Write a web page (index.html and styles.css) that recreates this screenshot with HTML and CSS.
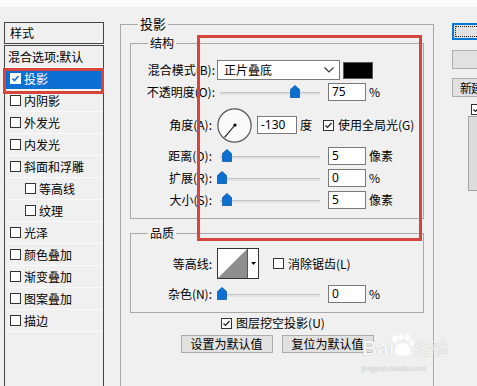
FILE: index.html
```html
<!DOCTYPE html>
<html lang="zh-CN">
<head>
<meta charset="utf-8">
<title>图层样式</title>
<link rel="stylesheet" href="styles.css">
</head>
<body>
<div class="dialog">
  <aside class="styles-panel">
    <div class="styles-header">样式</div>
    <ul class="styles-list">
      <li class="style-row plain">混合选项:默认</li>
      <li class="style-row selected"><span class="cb cb-sel"><svg viewBox="0 0 9 9"><polyline points="1.5,4.5 3.5,6.5 7.5,2"/></svg></span>投影<span class="annot-row"></span></li>
      <li class="style-row"><span class="cb"></span>内阴影</li>
      <li class="style-row"><span class="cb"></span>外发光</li>
      <li class="style-row"><span class="cb"></span>内发光</li>
      <li class="style-row"><span class="cb"></span>斜面和浮雕</li>
      <li class="style-row sub"><span class="cb"></span>等高线</li>
      <li class="style-row sub"><span class="cb"></span>纹理</li>
      <li class="style-row"><span class="cb"></span>光泽</li>
      <li class="style-row"><span class="cb"></span>颜色叠加</li>
      <li class="style-row"><span class="cb"></span>渐变叠加</li>
      <li class="style-row"><span class="cb"></span>图案叠加</li>
      <li class="style-row"><span class="cb"></span>描边</li>
    </ul>
  </aside>

  <main class="main">
    <fieldset class="group-outer">
      <legend>投影</legend>

      <fieldset class="group-inner structure">
        <legend>结构</legend>
        <div class="row r1">
          <span class="lbl">混合模式(B):</span>
          <span class="select"><span>正片叠底</span><svg class="chev" viewBox="0 0 10 6"><polyline points="0.5,0.5 5,5 9.5,0.5"/></svg></span>
          <span class="swatch"></span>
        </div>
        <div class="row r2">
          <span class="lbl">不透明度(O):</span>
          <span class="slider"><span class="track"></span><svg class="thumb" style="--v:75" viewBox="0 0 10 13"><path d="M0.5 4.5 L5 0.5 L9.5 4.5 V12.5 H0.5 Z"/></svg></span>
          <span class="num">75</span>
          <span class="unit">%</span>
        </div>
        <div class="row r3">
          <span class="lbl n">角度(A):</span>
          <svg class="dial" viewBox="0 0 35 35"><circle cx="17.5" cy="17.5" r="16.6"/><line x1="18" y1="17" x2="7.6" y2="29.4"/><circle class="dot" cx="18" cy="17" r="1.6"/></svg>
          <span class="num wide">-130</span>
          <span class="unit">度</span>
          <span class="cb cb-global"><svg viewBox="0 0 9 9"><polyline points="1.5,4.5 3.5,6.5 7.5,2"/></svg></span>
          <span class="cb-text">使用全局光(G)</span>
        </div>
        <div class="row">
          <span class="lbl n">距离(D):</span>
          <span class="slider"><span class="track"></span><svg class="thumb" style="--v:5" viewBox="0 0 10 13"><path d="M0.5 4.5 L5 0.5 L9.5 4.5 V12.5 H0.5 Z"/></svg></span>
          <span class="num">5</span>
          <span class="unit">像素</span>
        </div>
        <div class="row">
          <span class="lbl n">扩展(R):</span>
          <span class="slider"><span class="track"></span><svg class="thumb" style="--v:0" viewBox="0 0 10 13"><path d="M0.5 4.5 L5 0.5 L9.5 4.5 V12.5 H0.5 Z"/></svg></span>
          <span class="num">0</span>
          <span class="unit">%</span>
        </div>
        <div class="row">
          <span class="lbl n">大小(S):</span>
          <span class="slider"><span class="track"></span><svg class="thumb" style="--v:5" viewBox="0 0 10 13"><path d="M0.5 4.5 L5 0.5 L9.5 4.5 V12.5 H0.5 Z"/></svg></span>
          <span class="num">5</span>
          <span class="unit">像素</span>
        </div>
      </fieldset>

      <fieldset class="group-inner quality">
        <legend>品质</legend>
        <div class="row rc">
          <span class="lbl n">等高线:</span>
          <span class="contour">
            <span class="contour-img"><svg viewBox="0 0 29 29"><polygon points="0,29 29,0 29,29"/></svg></span>
            <span class="contour-arrow"><svg viewBox="0 0 5 3"><polygon points="0,0 5,0 2.5,3"/></svg></span>
          </span>
          <span class="cb cb-aa"></span>
          <span class="cb-text">消除锯齿(L)</span>
        </div>
        <div class="row rn">
          <span class="lbl n">杂色(N):</span>
          <span class="slider"><span class="track"></span><svg class="thumb" style="--v:0" viewBox="0 0 10 13"><path d="M0.5 4.5 L5 0.5 L9.5 4.5 V12.5 H0.5 Z"/></svg></span>
          <span class="num">0</span>
          <span class="unit">%</span>
        </div>
      </fieldset>

      <div class="knockout">
        <span class="cb"><svg viewBox="0 0 9 9"><polyline points="1.5,4.5 3.5,6.5 7.5,2"/></svg></span>
        <span>图层挖空投影(U)</span>
      </div>
      <div class="btns">
        <button class="btn">设置为默认值</button>
        <button class="btn">复位为默认值</button>
      </div>
    </fieldset>
  </main>

  <aside class="actions">
    <button class="abtn ok" aria-label="确定"></button>
    <button class="abtn cancel" aria-label="取消"></button>
    <button class="abtn new"><span class="new-text">新建</span></button>
    <span class="cb cb-preview"><svg viewBox="0 0 9 9"><polyline points="1.5,4.5 3.5,6.5 7.5,2"/></svg></span>
    <div class="preview"></div>
  </aside>

  <div class="annot-main"></div>

  <div class="watermark">
    <div class="wm-line">
      <span class="wm-bai">Bai</span>
      <svg class="wm-paw" viewBox="0 0 26 24"><ellipse cx="6" cy="6" rx="2.6" ry="3.4"/><ellipse cx="12" cy="3.6" rx="2.6" ry="3.4"/><ellipse cx="18.5" cy="4.4" rx="2.6" ry="3.4"/><ellipse cx="22.6" cy="10" rx="2.4" ry="3"/><path d="M6 19 C6 13 10 10 14 10 C18 10 22 14 22 19 C22 23 18 23 14 22 C10 23 6 23 6 19 Z"/></svg>
      <span class="wm-jy">经验</span>
    </div>
    <div class="wm-url">jingyan.baidu.com</div>
  </div>
</div>
</body>
</html>
```

FILE: styles.css
```css
* { box-sizing: border-box; }
html, body { margin: 0; padding: 0; }
body {
  width: 477px;
  height: 386px;
  overflow: hidden;
  background: linear-gradient(#fbfbfb 0 7px, #f0f0f0 7px);
  font-family: "Noto Sans CJK SC", "Microsoft YaHei", sans-serif;
  font-size: 12px;
  line-height: 16px;
  color: #000;
}

.dialog {
  position: relative;
  display: flex;
  align-items: flex-start;
  height: 386px;
}

/* ---------- styles list ---------- */
.styles-panel {
  flex: none;
  width: 100px;
  height: 364px;
  margin: 22px 0 0 4px;
  display: flex;
  flex-direction: column;
}
.styles-header {
  height: 22px;
  border: 1px solid #444;
  padding-left: 5px;
  line-height: 20px;
}
.styles-list {
  flex: 1;
  list-style: none;
  margin: 1px 0 0;
  padding: 0;
  border: 1px solid #444;
  border-bottom: none;
}
.style-row {
  position: relative;
  height: 22px;
  display: flex;
  align-items: center;
  gap: 3px;
  padding-left: 5px;
  border-bottom: 1px solid #fbfbfb;
}
.style-row.plain { padding-left: 3px; }
.style-row.sub { padding-left: 20px; }
.style-row.selected { background: #0c6fd3; color: #fff; }
.annot-row {
  position: absolute;
  left: -2px;
  right: -1px;
  top: 0;
  bottom: -5px;
  border: 3px solid #d6453d;
}

/* ---------- checkbox ---------- */
.cb {
  flex: none;
  width: 11px;
  height: 11px;
  border: 1px solid #333;
  background: #fff;
  display: block;
}
.cb svg {
  display: block;
  width: 9px;
  height: 9px;
  fill: none;
  stroke: #222;
  stroke-width: 1.2;
}
.cb-sel { border-color: #fff; }
.cb-sel svg { stroke: #0c6fd3; stroke-width: 1.6; }

/* ---------- main group ---------- */
.main {
  flex: none;
  width: 314px;
  margin: 16px 0 0 16px;
}
fieldset {
  margin: 0;
  padding: 0;
  min-width: 0;
  border: 1px solid #a9a9a9;
}
legend {
  padding: 0 2px;
  height: 16px;
  line-height: 16px;
}
.group-outer { height: 380px; }
.group-outer > legend { margin-left: 17px; font-size: 13px; }
.group-inner { margin: 3px 9px 0; }
.group-inner > legend { margin-left: 17px; }
.structure { padding: 9px 0 9px; }
.quality { margin-top: 6px; padding: 7px 0 9px; }

.row {
  display: flex;
  align-items: center;
  height: 18px;
  margin-top: 4px;
}
.row.r1 { height: 20px; margin-top: 0; }
.row.r2 { margin-top: 3px; }
.row.r3 { height: 36px; margin-top: 6px; }
.row.rc { height: 31px; margin-top: 0; }
.row.rn { margin-top: 6px; }

.lbl {
  flex: none;
  width: 84px;
  text-align: right;
  white-space: nowrap;
}
.lbl.n { padding-right: 3px; }

.select {
  flex: none;
  margin-left: 2px;
  width: 123px;
  height: 20px;
  background: #fff;
  border: 1px solid #7a7a7a;
  display: flex;
  align-items: center;
  justify-content: space-between;
  padding: 0 5px 0 6px;
}
.chev {
  width: 10px;
  height: 6px;
  fill: none;
  stroke: #333;
  stroke-width: 1.1;
}
.swatch {
  flex: none;
  margin-left: 3px;
  width: 30px;
  height: 17px;
  background: #000;
  border: 1px solid #5a5a5a;
}

.slider {
  position: relative;
  flex: none;
  margin-left: 2px;
  width: 105px;
  height: 18px;
  padding: 9px 2px 0 3px;
}
.track {
  display: block;
  height: 3px;
  background: #e2e2e2;
  border-top: 1px solid #c4c4c4;
}
.thumb {
  position: absolute;
  top: 2px;
  left: calc(var(--v) * 0.97px);
  width: 10px;
  height: 13px;
  fill: #0e6fd2;
  stroke: #0a58aa;
  stroke-width: 0.8;
}

.num {
  flex: none;
  margin-left: 6px;
  width: 38px;
  height: 18px;
  background: #fff;
  border: 1px solid #7a7a7a;
  padding-left: 3px;
  line-height: 16px;
  font-family: "Noto Sans", "Noto Sans CJK SC", sans-serif;
}
.num.wide { margin-left: 5px; width: 40px; }
.unit { margin-left: 3px; white-space: nowrap; }

.dial {
  flex: none;
  margin-left: 2px;
  width: 35px;
  height: 35px;
}
.dial circle { fill: #fafafa; stroke: #555; stroke-width: 1.2; }
.dial line { stroke: #111; stroke-width: 1.1; }
.dial .dot { fill: #000; stroke: none; }

.cb-global { margin-left: 11px; }
.cb-text { margin-left: 4px; white-space: nowrap; }

.contour {
  flex: none;
  margin-left: 2px;
  height: 31px;
  display: flex;
  border: 1px solid #333;
  background: #fff;
}
.contour-img {
  width: 30px;
  border-right: 1px solid #555;
}
.contour-img svg { display: block; width: 29px; height: 29px; fill: #8e8e8e; }
.contour-arrow {
  width: 10px;
  display: flex;
  align-items: center;
  justify-content: center;
}
.contour-arrow svg { width: 5px; height: 3px; fill: #000; }
.cb-aa { margin-left: 14px; }

.knockout {
  margin-top: 2px;
  height: 16px;
  display: flex;
  align-items: center;
  justify-content: center;
  gap: 4px;
  padding-right: 8px;
}
.btns {
  margin-top: 4px;
  display: flex;
  justify-content: center;
  gap: 9px;
}
.btn {
  width: 92px;
  height: 18px;
  padding: 0;
  background: #e1e1e1;
  border: 1px solid #adadad;
  font: inherit;
  color: #000;
  line-height: 16px;
}

/* ---------- right column ---------- */
.actions {
  flex: none;
  width: 100px;
  margin-left: 18px;
  display: flex;
  flex-direction: column;
  align-items: flex-start;
}
.abtn {
  flex: none;
  width: 94px;
  padding: 0;
  background: #e1e1e1;
  border: 1px solid #adadad;
  font: inherit;
  color: #000;
  line-height: 16px;
  text-align: left;
  white-space: nowrap;
}
.abtn.ok {
  margin-top: 23px;
  height: 17px;
  border-color: #0078d7;
  box-shadow: inset 0 0 0 1px #0078d7;
  outline: 1px dotted #222;
  outline-offset: -4px;
}
.abtn.cancel { margin-top: 10px; height: 19px; }
.abtn.new { margin-top: 9px; height: 19px; padding-left: 7px; }
.new-text { letter-spacing: -1px; }
.cb-preview { margin: 7px 0 0 19px; }
.preview {
  margin: 1px 0 0 16px;
  width: 60px;
  height: 75px;
  background: #dcdcdc;
  border: 1px solid #a4a4a4;
}

/* ---------- annotations / watermark ---------- */
.annot-main {
  position: absolute;
  left: 197px;
  top: 35px;
  width: 225px;
  height: 206px;
  border: 3px solid #d6453d;
}
.watermark {
  position: absolute;
  left: 362px;
  top: 331px;
  color: rgba(255, 255, 255, 0.92);
  text-shadow: 0 0 1px rgba(0, 0, 0, 0.3);
}
.wm-line { display: flex; align-items: flex-end; height: 28px; }
.wm-bai {
  font-family: "Liberation Sans", Arial, sans-serif;
  font-weight: bold;
  font-size: 21px;
  line-height: 22px;
}
.wm-paw {
  width: 26px;
  height: 24px;
  margin-left: -6px;
  margin-bottom: 2px;
  fill: rgba(255, 255, 255, 0.9);
}
.wm-jy { font-size: 17px; line-height: 22px; }
.wm-url {
  margin-top: 5px;
  font-family: "Liberation Sans", Arial, sans-serif;
  font-size: 8px;
  line-height: 9px;
  color: rgba(255, 255, 255, 0.6);
}
```
